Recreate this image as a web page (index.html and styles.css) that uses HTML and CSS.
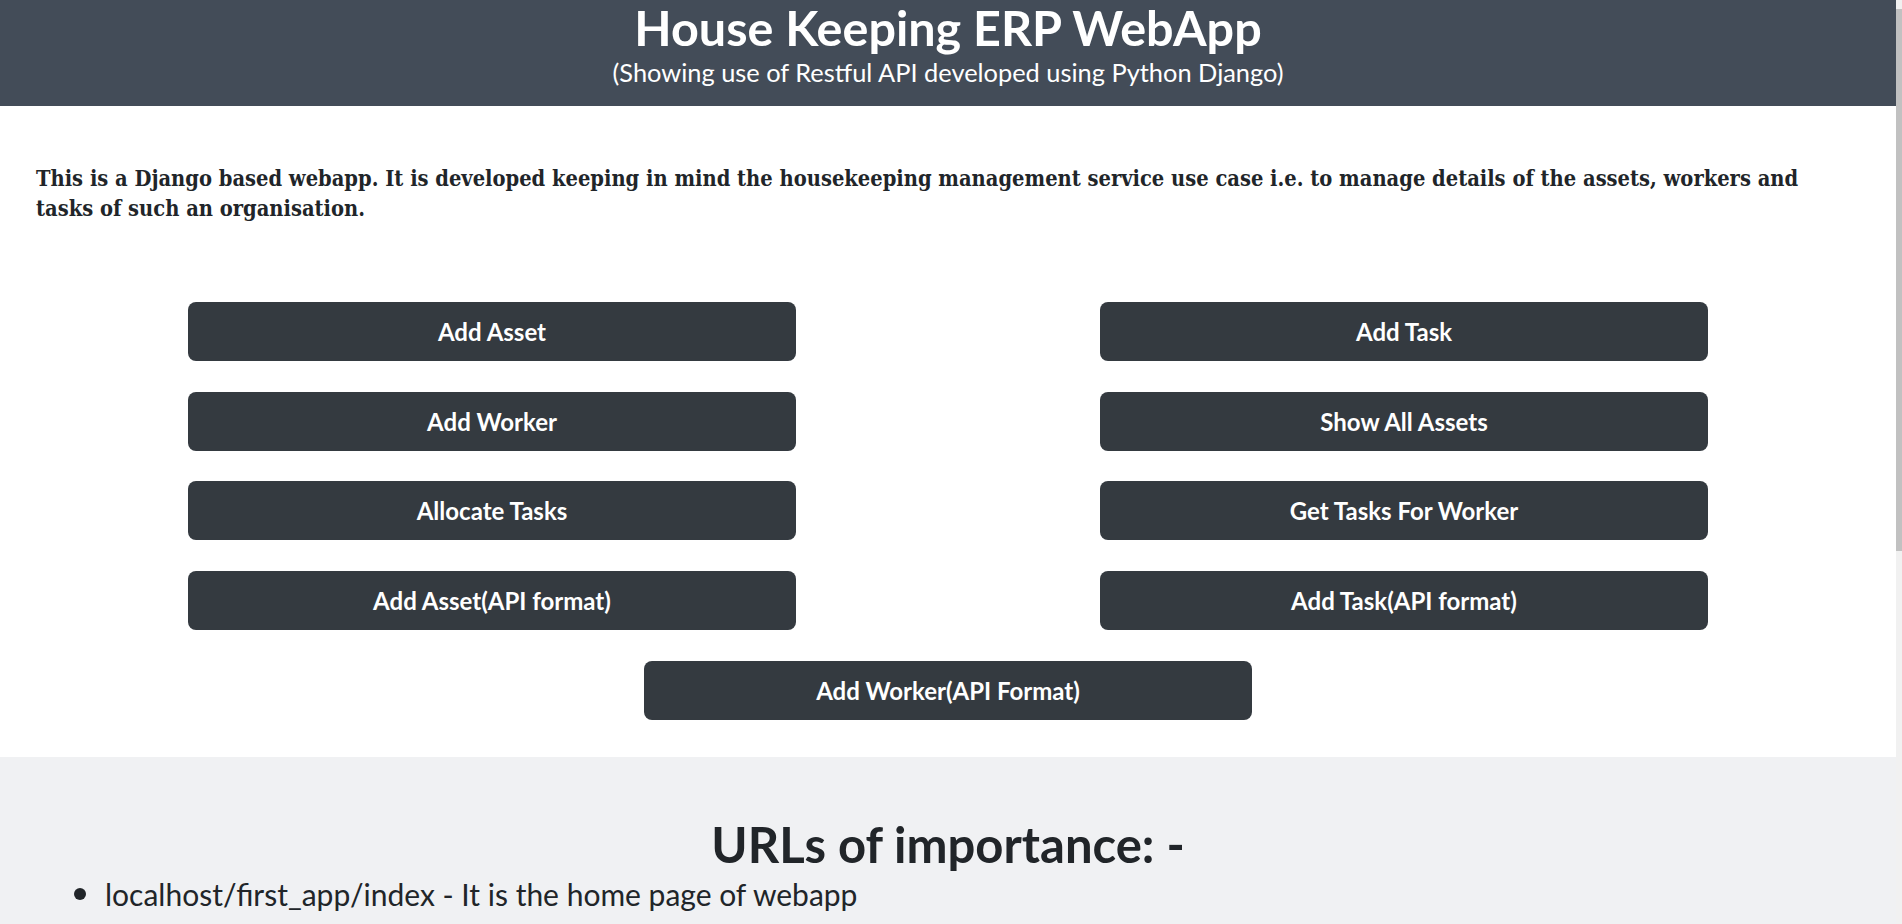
FILE: index.html
```html
<!DOCTYPE html>
<html lang="en">
<head>
<meta charset="utf-8">
<title>House Keeping ERP WebApp</title>
<link rel="stylesheet" href="styles.css">
</head>
<body>
<div class="page">
  <header class="topbar">
    <h1 class="title">House Keeping ERP WebApp</h1>
    <p class="subtitle">(Showing use of Restful API developed using Python Django)</p>
  </header>
  <main class="main">
    <p class="intro">This is a Django based webapp. It is developed keeping in mind the housekeeping management service use case i.e. to manage details of the assets, workers and tasks of such an organisation.</p>
    <div class="actions">
      <a class="btn" href="#">Add Asset</a>
      <a class="btn" href="#">Add Task</a>
      <a class="btn" href="#">Add Worker</a>
      <a class="btn" href="#">Show All Assets</a>
      <a class="btn" href="#">Allocate Tasks</a>
      <a class="btn" href="#">Get Tasks For Worker</a>
      <a class="btn" href="#">Add Asset(API format)</a>
      <a class="btn" href="#">Add Task(API format)</a>
      <a class="btn btn-wide" href="#">Add Worker(API Format)</a>
    </div>
  </main>
  <section class="urls">
    <h2 class="urls-title">URLs of importance: -</h2>
    <ul class="url-list">
      <li>localhost/first_app/index - It is the home page of webapp</li>
    </ul>
  </section>
</div>
<div class="scrollbar" aria-hidden="true"><div class="scrollbar-thumb"></div></div>
</body>
</html>
```
FILE: styles.css
```css
* { box-sizing: border-box; }

body {
  margin: 0;
  font-family: Lato, "Noto Sans", sans-serif;
  color: #212529;
  background: #fff;
}

.page {
  margin-right: 6px;
}

.scrollbar {
  position: fixed;
  top: 0;
  right: 0;
  width: 6px;
  height: 100vh;
  background: #f1f1f1;
  padding-top: 9px;
}

.scrollbar-thumb {
  height: 542px;
  background: #c1c1c1;
}

.topbar {
  background: #434c58;
  color: #fff;
  text-align: center;
  height: 106px;
  padding-top: 1px;
}

.title {
  margin: 0;
  font-size: 48.5px;
  font-weight: 700;
  line-height: 52px;
}

.subtitle {
  margin: 3px 0 0;
  font-size: 25.4px;
  line-height: 32px;
}

.main {
  padding: 58px 36px 37px;
}

.intro {
  margin: 0 0 78px;
  max-width: 1800px;
  font-family: "DejaVu Serif Condensed", "DejaVu Serif", serif;
  font-weight: 700;
  font-size: 21.7px;
  line-height: 30px;
}

.actions {
  display: grid;
  grid-template-columns: 1fr 1fr;
  row-gap: 30.7px;
}

.btn {
  justify-self: center;
  width: 608px;
  height: 59px;
  display: flex;
  align-items: center;
  justify-content: center;
  background: #343a40;
  color: #fff;
  text-decoration: none;
  border-radius: 8px;
  font-size: 24px;
  font-weight: 700;
}

.btn-wide {
  grid-column: 1 / -1;
}

.urls {
  background: #f0f1f3;
  padding: 57px 36px 640px;
}

.urls-title {
  margin: 0;
  text-align: center;
  font-size: 49px;
  font-weight: 700;
  line-height: 60px;
}

.url-list {
  margin: 0;
  padding-left: 69px;
  font-size: 30px;
  line-height: 36px;
}

.url-list li::marker {
  font-size: 36px;
}
```
